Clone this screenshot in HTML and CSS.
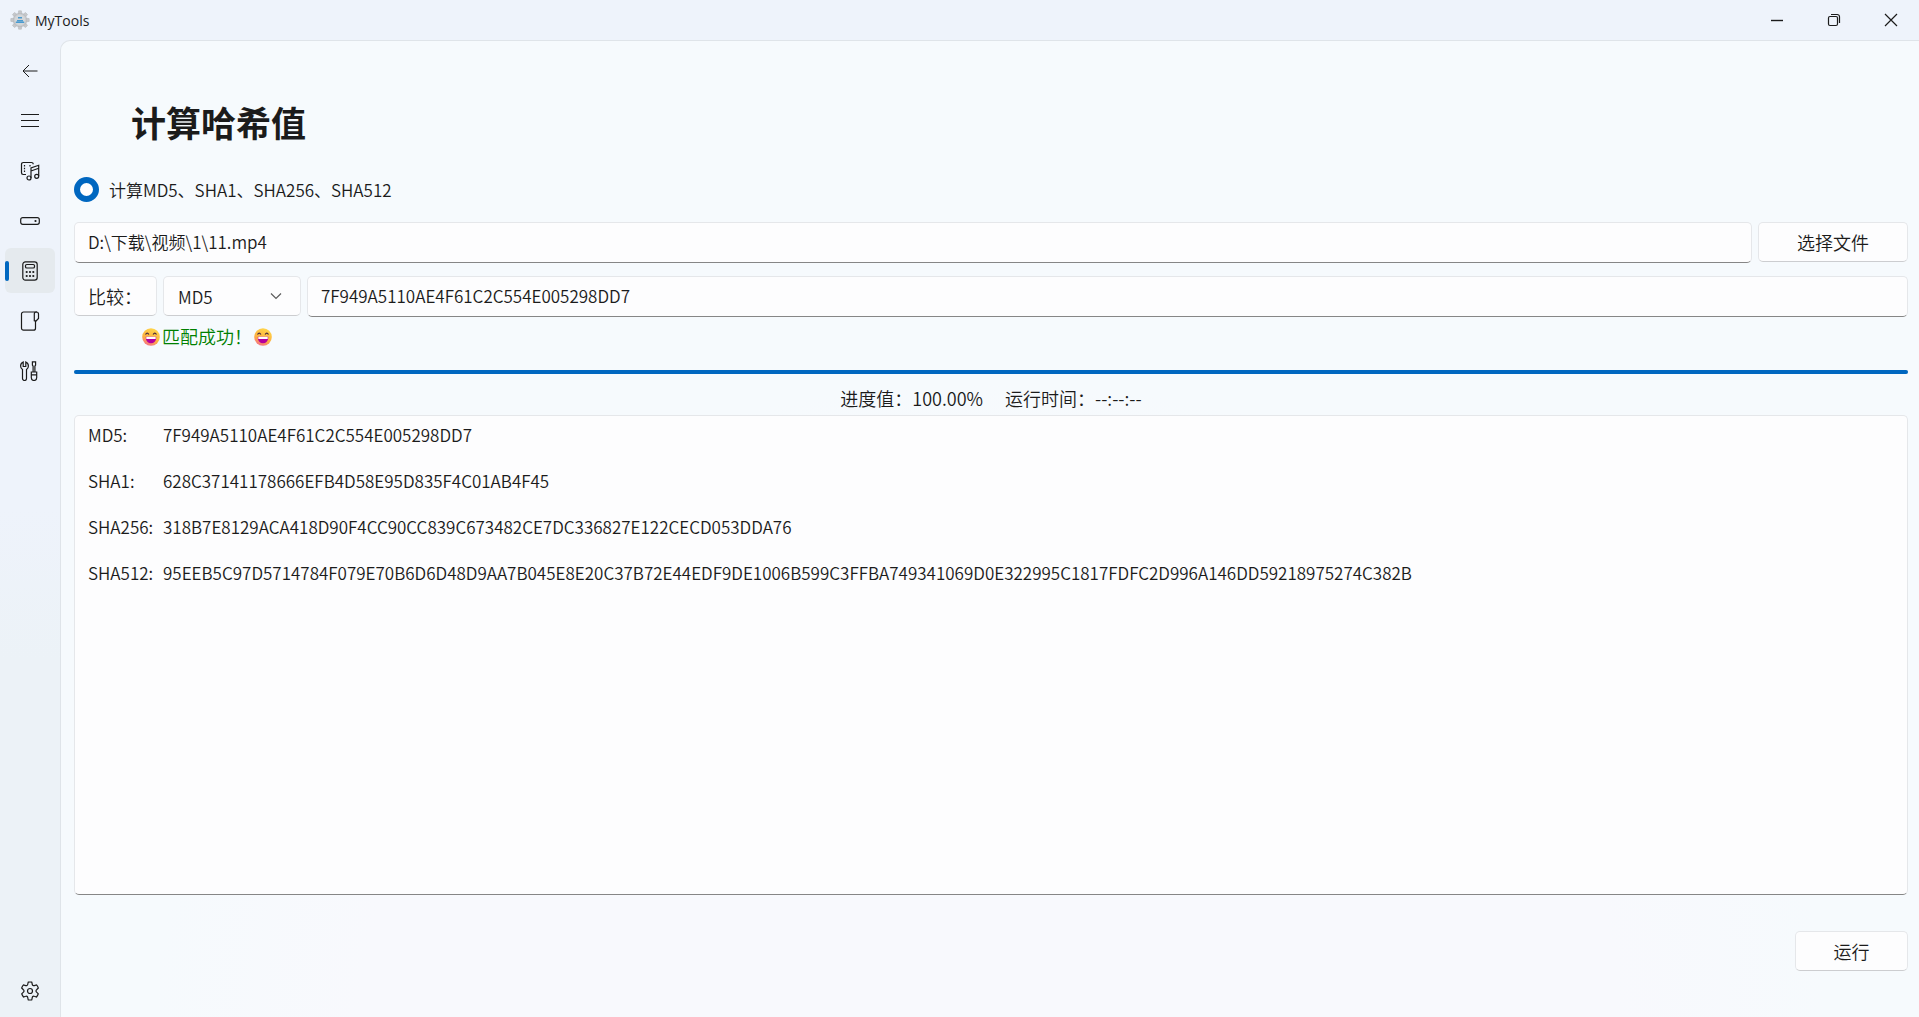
FILE: index.html
```html
<!DOCTYPE html>
<html lang="zh-CN">
<head>
<meta charset="utf-8">
<title>MyTools</title>
<link rel="stylesheet" href="styles.css">
</head>
<body>
<div class="window">
  <header class="titlebar">
    <svg class="app-icon" viewBox="0 0 20 20" aria-hidden="true">
      <g fill="#c6c8cb" stroke="#b0b2b6" stroke-width=".5">
        <g id="teeth"><path d="M8.6.8h2.8l.5 3.4H8.1z"/><path d="M8.6 19.2h2.8l.5-3.4H8.1z"/><path d="M.8 8.6v2.8l3.4.5V8.1z"/><path d="M19.2 8.6v2.8l-3.4.5V8.1z"/></g>
        <use href="#teeth" transform="rotate(45 10 10)"/>
        <circle cx="10" cy="10" r="6.8"/>
      </g>
      <circle cx="10" cy="10" r="5.4" fill="#d3d6d9"/>
      <path d="M8 7.8h4M7 10.6h6M5.8 12.2h8.4" stroke="#4a9bd0" stroke-width="1.4"/>
    </svg>
    <span class="app-name">MyTools</span>
    <div class="caption-buttons">
      <button class="caption" aria-label="最小化"><svg viewBox="0 0 14 14"><path d="M1 7.5h12" stroke-width="1.4"/></svg></button>
      <button class="caption" aria-label="还原"><svg viewBox="0 0 14 14"><rect x="1.5" y="3.5" width="9" height="9" rx="1.5"/><path d="M4 1.5h6.2a2.3 2.3 0 0 1 2.3 2.3V10"/></svg></button>
      <button class="caption" aria-label="关闭"><svg viewBox="0 0 14 14"><path d="M1 1l12 12M13 1L1 13"/></svg></button>
    </div>
  </header>
  <div class="body">
    <nav class="sidebar">
      <button class="nav-item" aria-label="返回"><svg viewBox="0 0 20 20"><path d="M17.500 10H3M9 4L3 10l6 6" stroke-width="1"/></svg></button>
      <button class="nav-item" aria-label="菜单"><svg viewBox="0 0 20 20"><path d="M1 3.500h18M1 9.500h18M1 15.500h18"/></svg></button>
      <button class="nav-item" aria-label="音视频"><svg viewBox="0 0 20 20"><path d="M6 13.500H3.200A1.700 1.700 0 0 1 1.500 11.800V3.200A1.700 1.700 0 0 1 3.200 1.500H11.500A1.700 1.700 0 0 1 13.200 3.200M4.500 4v1.500M4.500 6.800v1.500M4.500 9.600v1.500M10 4v1.500"/><path d="M11 17V7L18.700 4.300V15M11 10l7.700-2.700"/><circle cx="9" cy="17" r="2"/><circle cx="16.700" cy="15.300" r="2"/></svg></button>
      <button class="nav-item" aria-label="磁盘"><svg viewBox="0 0 20 20"><rect x=".7" y="6.700" width="18.600" height="6.600" rx="2"/><circle cx="15.500" cy="10" r=".5"/></svg></button>
      <button class="nav-item selected" aria-label="计算哈希值" aria-current="page"><svg viewBox="0 0 20 20"><rect x="2.800" y=".8" width="14.400" height="18.400" rx="2.600"/><rect x="5.500" y="3.500" width="9" height="3.500" rx="1.300"/><path d="M6.700 11h.01M10 11h.01M13.300 11h.01M6.700 15h.01M10 15h.01M13.300 15h.01" stroke-width="2.200" stroke-linecap="round"/></svg></button>
      <button class="nav-item" aria-label="文稿"><svg viewBox="0 0 20 20"><path d="M15.500 9.500V17.200a2 2 0 0 1-2 2H3.500a2 2 0 0 1-2-2V3a2 2 0 0 1 2-2H17"/><path d="M14.300 9.800V3c0-1.300.8-2 2-2s2.200.8 2.200 2V7.500L16 10z"/></svg></button>
      <button class="nav-item" aria-label="工具"><svg viewBox="0 0 20 20"><path d="M3.200 1v4.500h2.600V1C7.300 1.700 8.400 3.200 8.400 5c0 1.700-.7 2.800-1.900 3.600v8.900a2 2 0 0 1-4 0V8.600C1.300 7.800.6 6.700.6 5c0-1.800 1.100-3.300 2.600-4z"/><path d="M12.400.8h3.200V4l-.7 1.200V11h-1.800V5.200L12.400 4zM11.300 11h5.400v5.800a2.700 2.700 0 0 1-5.400 0zM11.300 13.800h5.400"/></svg></button>
      <button class="nav-item settings" aria-label="设置"><svg viewBox="0 0 20 20"><circle cx="10" cy="10" r="2.500"/><path d="M8.200 1.200a9 9 0 0 1 3.600 0l.5 2.300a1.500 1.500 0 0 0 2 1.100l2.200-.7a9 9 0 0 1 1.800 3.100l-1.700 1.700a1.500 1.500 0 0 0 0 2.400l1.700 1.700a9 9 0 0 1-1.800 3.200l-2.200-.7a1.500 1.500 0 0 0-2 1.100l-.5 2.400a9 9 0 0 1-3.600 0l-.5-2.400a1.500 1.500 0 0 0-2-1.100l-2.200.7a9 9 0 0 1-1.800-3.200l1.700-1.700a1.500 1.500 0 0 0 0-2.400L1.700 7a9 9 0 0 1 1.800-3.100l2.200.7a1.500 1.500 0 0 0 2-1.100z"/></svg></button>
    </nav>
    <main class="page">
      <h1>计算哈希值</h1>
      <label class="mode"><input type="radio" name="mode" checked><span>计算MD5、SHA1、SHA256、SHA512</span></label>
      <div class="row">
        <input class="field grow" type="text" aria-label="文件路径" value="D:\下载\视频\1\11.mp4">
        <button class="btn choose">选择文件</button>
      </div>
      <div class="row">
        <label class="btn compare" for="expected">比较：</label>
        <div class="select-wrap">
          <select class="btn" aria-label="算法"><option>MD5</option><option>SHA1</option><option>SHA256</option><option>SHA512</option></select>
          <svg class="chevron" viewBox="0 0 12 12" aria-hidden="true"><path d="M1 3.500l5 5 5-5"/></svg>
        </div>
        <input class="field grow" id="expected" type="text" value="7F949A5110AE4F61C2C554E005298DD7">
      </div>
      <p class="match">
        <svg class="emoji" viewBox="0 0 18 18" aria-hidden="true">
          <defs>
            <linearGradient id="face" x1="0.700" y1="0" x2="0.300" y2="1"><stop offset="0" stop-color="#ffd84a"/><stop offset=".6" stop-color="#fdb140"/><stop offset="1" stop-color="#f5708a"/></linearGradient>
            <g id="grin">
              <circle cx="9" cy="9" r="8.800" fill="url(#face)"/>
              <path d="M3.500 6.500q1.700-2.800 3.400 0M11.100 6.500q1.700-2.800 3.400 0" fill="none" stroke="#4a2b3f" stroke-width="1.200"/>
              <path d="M3.800 8.800h10.400V10a5.200 5.200 0 0 1-10.400 0z" fill="#b4009e"/><path d="M4.300 8.800h9.400v2.200H4.300z" fill="#fff"/>
            </g>
          </defs>
          <use href="#grin"/>
        </svg>
        <span>匹配成功！</span>
        <svg class="emoji" viewBox="0 0 18 18" aria-hidden="true"><use href="#grin"/></svg>
      </p>
      <progress value="100" max="100" aria-label="进度"></progress>
      <p class="status"><span>进度值：100.00%</span><span>运行时间：--:--:--</span></p>
      <textarea class="field output" aria-label="结果" spellcheck="false">MD5:	7F949A5110AE4F61C2C554E005298DD7

SHA1:	628C37141178666EFB4D58E95D835F4C01AB4F45

SHA256:	318B7E8129ACA418D90F4CC90CC839C673482CE7DC336827E122CECD053DDA76

SHA512:	95EEB5C97D5714784F079E70B6D6D48D9AA7B045E8E20C37B72E44EDF9DE1006B599C3FFBA749341069D0E322995C1817FDFC2D996A146DD59218975274C382B</textarea>
      <button class="btn run">运行</button>
    </main>
  </div>
</div>
</body>
</html>
```
FILE: styles.css
```css
* { box-sizing: border-box; }

body, h1, p { margin: 0; }

body, button, input, select, textarea {
  font-family: "Noto Sans CJK SC", sans-serif;
  font-size: 17px;
  font-weight: 350;
  line-height: 23px;
  color: #1b1b1b;
}

.window {
  display: flex;
  flex-direction: column;
  height: 100vh;
  background: linear-gradient(#eef3fb 50%, #ecf2f7 65%);
}

.titlebar {
  display: flex;
  align-items: center;
  height: 40px;
  padding-left: 10px;
  gap: 5px;
}

.app-icon { width: 20px; height: 20px; }
.app-name { font-family: "Open Sans", sans-serif; font-size: 14px; font-weight: 400; }

.caption-buttons { display: flex; margin-left: auto; }

.caption {
  display: grid;
  place-items: center;
  width: 57px;
  height: 38px;
  padding: 0;
  border: 0;
  background: none;
}

.caption svg { width: 14px; height: 14px; }

.caption svg, .nav-item svg, .chevron {
  fill: none;
  stroke: #1b1b1b;
  stroke-width: 1.2;
}

.body { display: flex; flex: 1; min-height: 0; }

.sidebar {
  display: flex;
  flex-direction: column;
  gap: 5px;
  width: 60px;
  padding: 8px 5px 4px;
}

.nav-item {
  position: relative;
  display: grid;
  place-items: center;
  width: 50px;
  height: 45px;
  padding: 0;
  border: 0;
  border-radius: 6px;
  background: none;
}

.nav-item svg { width: 20px; height: 20px; }
.nav-item.selected { background: #e5eaee; }

.nav-item.selected::before {
  content: "";
  position: absolute;
  left: 0;
  top: 13px;
  width: 4px;
  height: 20px;
  border-radius: 2px;
  background: #0067c0;
}

.settings { margin-top: auto; }

.page {
  display: flex;
  flex: 1;
  flex-direction: column;
  min-width: 0;
  padding: 56px 11px 46px 13px;
  border: solid #dfe4e9;
  border-width: 1px 0 0 1px;
  border-radius: 10px 0 0 0;
  background: radial-gradient(ellipse 45% 65% at 50% 100%, #f8f9fd 75%, #f6fafd);
}

h1 {
  padding-left: 57px;
  font-size: 35px;
  line-height: 50px;
  font-weight: 700;
}

.mode {
  display: flex;
  align-items: center;
  align-self: flex-start;
  gap: 10px;
  margin-top: 30px;
}

.mode input {
  appearance: none;
  width: 25px;
  height: 25px;
  margin: 0;
  border: 6px solid #0067c0;
  border-radius: 50%;
  background: #fff;
}

.row { display: flex; gap: 6px; height: 41px; margin-top: 20px; }
.row + .row { margin-top: 13px; }

.field {
  min-width: 0;
  padding: 0 13px 2px;
  border: 1px solid #e5e7ea;
  border-bottom-color: #868686;
  border-radius: 5px;
  background: #fdfdfe;
  outline: 0;
}

.grow { flex: 1; }

.btn {
  height: 40px;
  padding: 0 13px;
  border: 1px solid #e5e7ea;
  border-bottom-color: #cccdd0;
  border-radius: 5px;
  background: #fdfdfe;
}

.choose, .run, .compare, .match, .status { font-size: 18px; }

.choose { width: 150px; }
.compare { width: 83px; line-height: 38px; }

.select-wrap { position: relative; width: 138px; }
.select-wrap select { width: 100%; padding: 0 14px; appearance: none; }

.chevron {
  position: absolute;
  right: 19px;
  top: 14px;
  width: 12px;
  height: 12px;
  pointer-events: none;
}

.select-wrap .chevron { stroke: #5c5c5c; }

.match {
  display: flex;
  align-items: center;
  gap: 2px;
  margin-top: 8px;
  padding-left: 68px;
  color: #008000;
}

.emoji { width: 18px; height: 18px; }

progress {
  appearance: none;
  display: block;
  width: 100%;
  height: 4px;
  margin-top: 22px;
  border: 0;
}

progress::-webkit-progress-bar { border-radius: 2px; background: #d0d4d8; }
progress::-webkit-progress-value { border-radius: 2px; background: #0067c0; }

.status {
  display: flex;
  justify-content: center;
  gap: 22px;
  margin: 13px 0 5px;
}

.output {
  flex: 1;
  min-height: 100px;
  padding-top: 7px;
  resize: none;
  tab-size: 75px;
}

.run { align-self: flex-end; width: 113px; margin-top: 36px; flex-shrink: 0; }
```
